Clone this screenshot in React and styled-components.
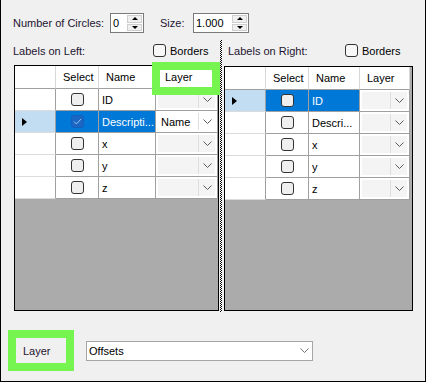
import { Fragment } from "react";
import styled, { createGlobalStyle } from "styled-components";

const GlobalStyle = createGlobalStyle`
  body {
    margin: 0;
    font-family: "Liberation Sans", Arial, sans-serif;
    font-size: 11px;
    color: #000;
  }
`;

const Window = styled.div`
  width: 426px;
  height: 382px;
  box-sizing: border-box;
  background: #f0f0f0;
  border-left: 1px solid #000;
  border-right: 1px solid #000;
  border-bottom: 1px solid #000;
  display: flex;
  flex-direction: column;
`;

const TopRow = styled.div`
  display: flex;
  align-items: center;
  height: 20px;
  margin-top: 13px;
  padding-left: 12px;
`;

const FieldLabel = styled.span`
  width: ${(p) => p.$width}px;
  margin-left: ${(p) => p.$gap || 0}px;
  color: #1e1430;
`;

const SpinBox = styled.div`
  width: ${(p) => p.$width}px;
  height: 20px;
  box-sizing: border-box;
  border: 1px solid #7a7a7a;
  background: #fff;
  display: flex;
`;

const SpinValue = styled.span`
  flex: 1;
  padding-left: 2px;
  line-height: 18px;
`;

const SpinButtons = styled.div`
  width: 15px;
  display: flex;
  flex-direction: column;
  padding: 1px 1px 1px 0;
  gap: 1px;
`;

const SpinBtn = styled.div`
  flex: 1;
  background: #f0f0f0;
  border: 1px solid #cfcfcf;
  display: flex;
  align-items: center;
  justify-content: center;

  &::after {
    content: "";
    border-left: 3px solid transparent;
    border-right: 3px solid transparent;
    ${(p) => (p.$up ? "border-bottom: 3px solid #000;" : "border-top: 3px solid #000;")}
  }
`;

const SplitArea = styled.div`
  display: flex;
  height: 272px;
  margin-top: 7px;
  padding-left: 12px;
`;

const Panel = styled.div`
  width: ${(p) => p.$width}px;
  display: flex;
  flex-direction: column;
  padding-bottom: 1px;
  box-sizing: border-box;
`;

const LabelRow = styled.div`
  display: flex;
  align-items: center;
  height: 21px;
`;

const PanelTitle = styled.span`
  width: ${(p) => p.$width}px;
  box-sizing: border-box;
  padding-left: ${(p) => p.$pad || 0}px;
  color: #1e1430;
`;

const CheckLabel = styled.label`
  display: flex;
  align-items: center;
  gap: 4px;
`;

const Box = styled.span`
  width: 13px;
  height: 13px;
  box-sizing: border-box;
  border: 1px solid ${(p) => (p.$checked ? "#1560bd" : "#333")};
  border-radius: 3px;
  background: ${(p) => (p.$checked ? "#1a66c2" : p.$light ? "#f7f7f7" : "#efefef")};
  display: flex;
  align-items: center;
  justify-content: center;
`;

const Splitter = styled.div`
  width: 4px;
  background: repeating-conic-gradient(#000 0 25%, #fff 0 50%) 1px 0 / 2px 2px;
  background-size: 2px 2px;
  background-clip: content-box;
  padding: 0 1px;
  box-sizing: border-box;
`;

const GridBox = styled.div`
  flex: 1;
  margin-top: ${(p) => p.$top}px;
  margin-left: 1px;
  border: 1px solid #000;
  background: #ababab;
`;

const GridTable = styled.div`
  display: grid;
  grid-template-columns: ${(p) => p.$cols};
  grid-template-rows: 23px repeat(5, 22px);
`;

const HeadCell = styled.div`
  position: relative;
  background: #fff;
  border-right: 1px solid #d8d8d8;
  border-bottom: 1px solid #a0a0a0;
  padding-left: ${(p) => p.$pad || 7}px;
  display: flex;
  align-items: center;
`;

const Highlight = styled.div`
  position: absolute;
  left: -4px;
  top: -4px;
  width: 68px;
  height: 33px;
  box-sizing: border-box;
  border: 8px solid #76f550;
  z-index: 2;
`;

const RowHead = styled.div`
  background: ${(p) => (p.$selected ? "#c2dcf2" : "#fff")};
  border-right: 1px solid #a0a0a0;
  border-bottom: 1px solid #dcdcdc;
  display: flex;
  align-items: center;
  padding-left: 7px;
`;

const Arrow = styled.span`
  border-left: 5px solid #000;
  border-top: 4px solid transparent;
  border-bottom: 4px solid transparent;
`;

const Cell = styled.div`
  background: ${(p) => (p.$selected ? "#0078d7" : "#fff")};
  color: ${(p) => (p.$selected ? "#fff" : "#000")};
  border-right: 1px solid #a0a0a0;
  border-bottom: 1px solid #a0a0a0;
  display: flex;
  align-items: center;
  justify-content: ${(p) => (p.$center ? "center" : "flex-start")};
  padding-left: ${(p) => (p.$center ? 0 : 3)}px;
  white-space: nowrap;
  overflow: hidden;
`;

const ComboCell = styled.div`
  background: #fff;
  border-right: 1px solid #a0a0a0;
  border-bottom: 1px solid #a0a0a0;
  padding: 1px;
  display: flex;
`;

const Combo = styled.div`
  flex: 1;
  display: flex;
  align-items: center;
  background: ${(p) => (p.$filled ? "#f4f4f4" : "#fff")};
  border: 1px solid #fff;
`;

const ComboValue = styled.span`
  flex: 1;
  padding-left: 3px;
`;

const DropBtn = styled.span`
  width: 16px;
  align-self: stretch;
  border-left: ${(p) => (p.$plain ? "none" : "1px solid #dedede")};
  display: flex;
  align-items: center;
  justify-content: center;
`;

const BottomRow = styled.div`
  display: flex;
  align-items: center;
  margin-top: 18px;
  padding-left: 7px;
`;

const LayerTag = styled.div`
  width: 66px;
  height: 41px;
  box-sizing: border-box;
  border: 8px solid #76f550;
  padding-left: 7px;
  display: flex;
  align-items: center;
  color: #1e1430;
`;

const SelectBox = styled.div`
  width: 227px;
  height: 20px;
  margin-left: 12px;
  box-sizing: border-box;
  border: 1px solid #a6a6a6;
  background: #fff;
  display: flex;
  align-items: center;
  padding-left: 2px;
`;

const SelectValue = styled.span`
  flex: 1;
`;

const Chevron = ({ color = "#5a5a5a" }) => (
  <svg width="9" height="5" viewBox="0 0 9 5">
    <polyline points="0.5,0.5 4.5,4.5 8.5,0.5" fill="none" stroke={color} strokeWidth="1" />
  </svg>
);

const Tick = () => (
  <svg width="9" height="7" viewBox="0 0 9 7">
    <polyline points="1,3.5 3.5,6 8,1" fill="none" stroke="#9cc3ee" strokeWidth="1" />
  </svg>
);

function Spinner({ value, width }) {
  return (
    <SpinBox $width={width}>
      <SpinValue>{value}</SpinValue>
      <SpinButtons>
        <SpinBtn $up />
        <SpinBtn />
      </SpinButtons>
    </SpinBox>
  );
}

function DataGrid({ cols, rows, top, highlight }) {
  return (
    <GridBox $top={top}>
      <GridTable $cols={cols}>
        <HeadCell />
        <HeadCell>Select</HeadCell>
        <HeadCell>Name</HeadCell>
        <HeadCell $pad={highlight ? 9 : 7}>
          Layer
          {highlight && <Highlight />}
        </HeadCell>
        {rows.map((r) => (
          <Fragment key={r.name}>
            <RowHead $selected={r.selected}>{r.selected && <Arrow />}</RowHead>
            <Cell $selected={r.selected} $center>
              <Box $checked={r.checked}>{r.checked && <Tick />}</Box>
            </Cell>
            <Cell $selected={r.selected}>{r.name}</Cell>
            <ComboCell>
              <Combo $filled={!r.layer}>
                <ComboValue>{r.layer}</ComboValue>
                <DropBtn>
                  <Chevron />
                </DropBtn>
              </Combo>
            </ComboCell>
          </Fragment>
        ))}
      </GridTable>
    </GridBox>
  );
}

const leftRows = [
  { name: "ID" },
  { name: "Descripti...", selected: true, checked: true, layer: "Name" },
  { name: "x" },
  { name: "y" },
  { name: "z" },
];

const rightRows = [
  { name: "ID", selected: true },
  { name: "Descri..." },
  { name: "x" },
  { name: "y" },
  { name: "z" },
];

export default function App() {
  return (
    <>
      <GlobalStyle />
      <Window>
        <TopRow>
          <FieldLabel $width={97}>Number of Circles:</FieldLabel>
          <Spinner value="0" width={34} />
          <FieldLabel $width={33} $gap={16}>Size:</FieldLabel>
          <Spinner value="1.000" width={56} />
        </TopRow>

        <SplitArea>
          <Panel $width={206}>
            <LabelRow>
              <PanelTitle $width={140}>Labels on Left:</PanelTitle>
              <CheckLabel>
                <Box $light />
                Borders
              </CheckLabel>
            </LabelRow>
            <DataGrid cols="41px 43px 57px 62px" rows={leftRows} top={4} highlight />
          </Panel>
          <Splitter />
          <Panel $width={190}>
            <LabelRow>
              <PanelTitle $width={122} $pad={5}>Labels on Right:</PanelTitle>
              <CheckLabel>
                <Box $light />
                Borders
              </CheckLabel>
            </LabelRow>
            <DataGrid cols="41px 43px 51px 50px" rows={rightRows} top={5} />
          </Panel>
        </SplitArea>

        <BottomRow>
          <LayerTag>Layer</LayerTag>
          <SelectBox>
            <SelectValue>Offsets</SelectValue>
            <DropBtn $plain>
              <Chevron color="#707070" />
            </DropBtn>
          </SelectBox>
        </BottomRow>
      </Window>
    </>
  );
}
